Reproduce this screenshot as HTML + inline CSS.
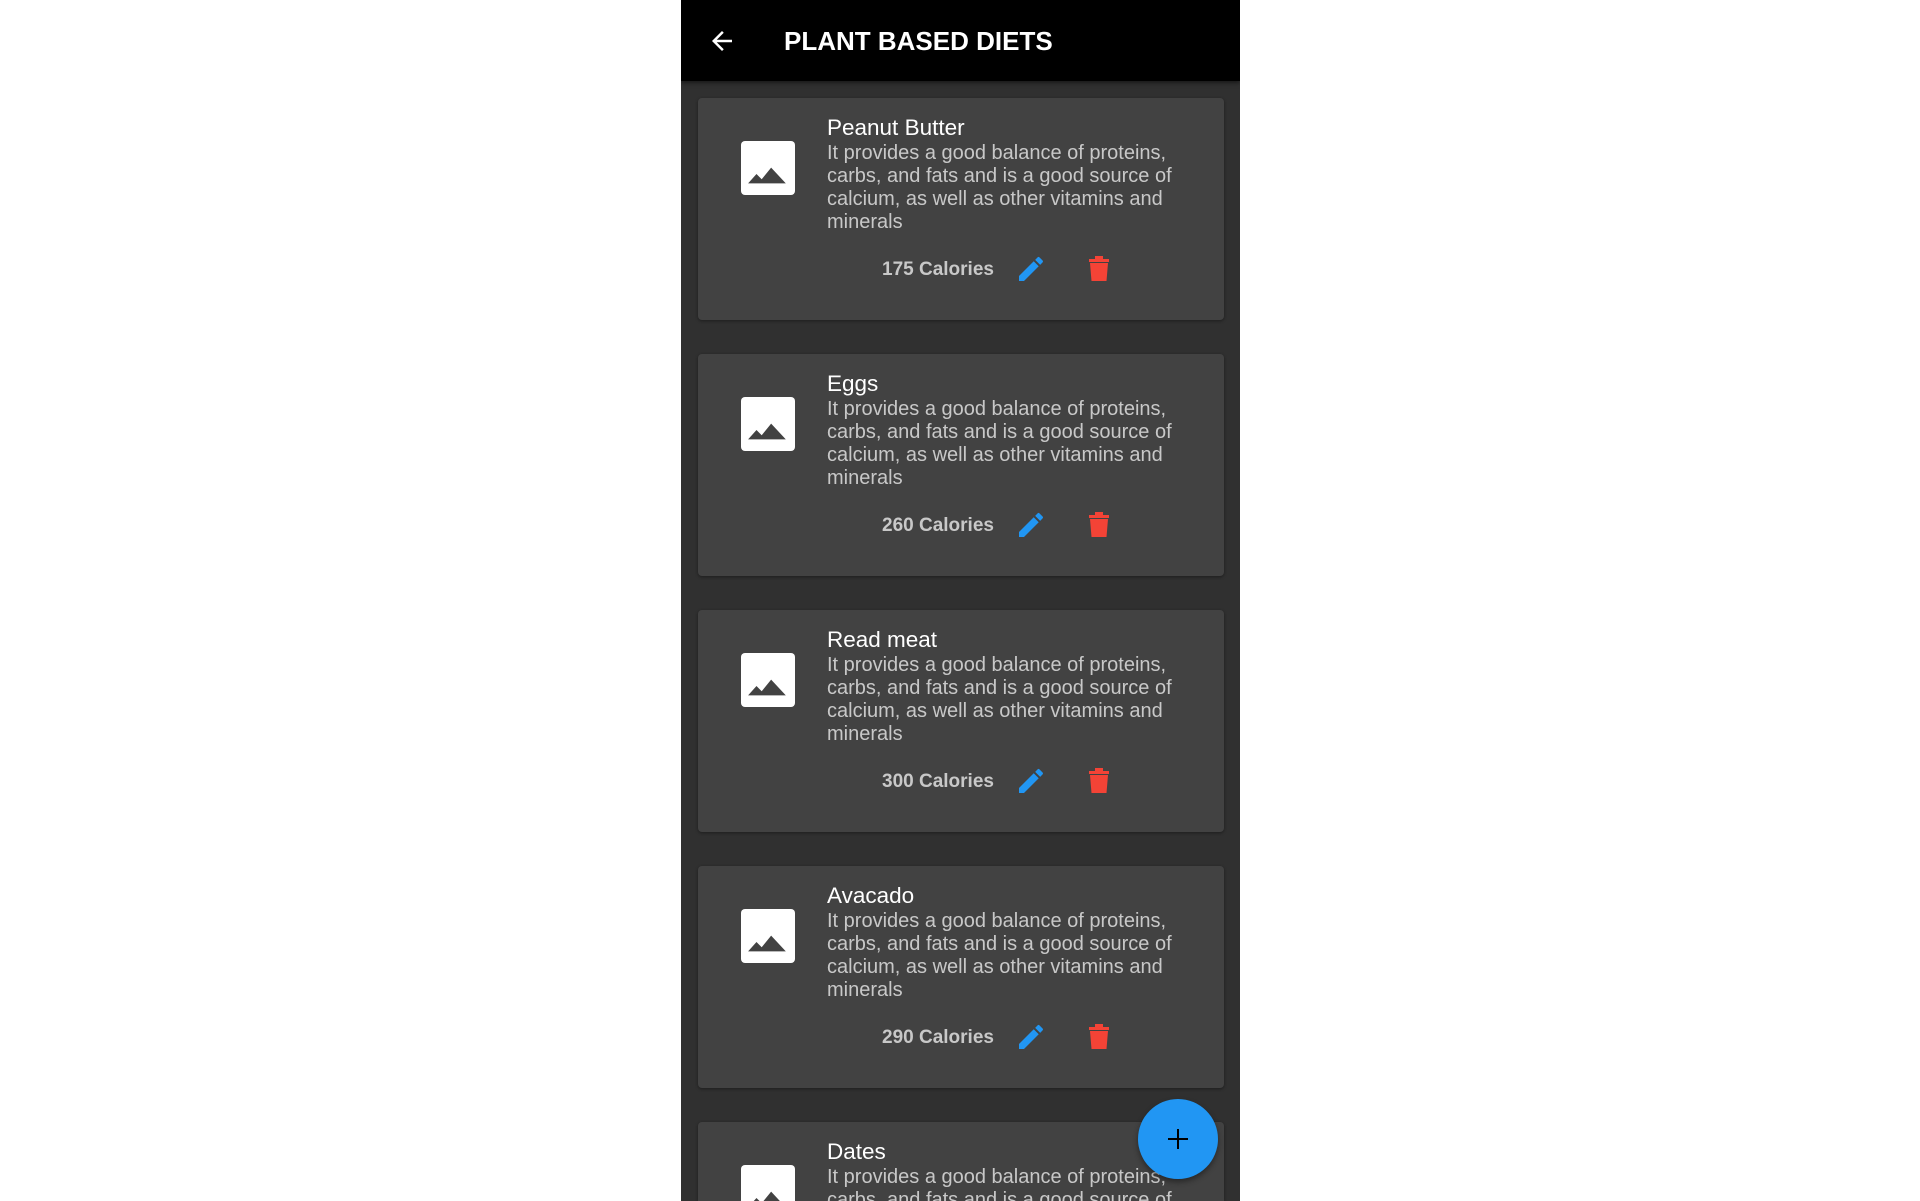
<!DOCTYPE html>
<html><head><meta charset="utf-8"><style>
*{margin:0;padding:0;box-sizing:border-box}
body{width:1920px;height:1201px;background:#fff;position:relative;overflow:hidden;font-family:"Liberation Sans",Roboto,sans-serif}
.app{position:absolute;left:681px;top:0;width:559px;height:1201px;background:#303030;overflow:hidden}
.bar{position:absolute;left:0;top:0;width:559px;height:81px;background:#000;box-shadow:0 2px 4px rgba(0,0,0,.5);z-index:2}
.bar .t{position:absolute;left:103px;top:26px;color:#fff;font-size:26px;font-weight:bold;letter-spacing:0px}
.bar svg{position:absolute;left:26px;top:26px}
.card{position:absolute;left:17px;width:526px;height:222px;background:#424242;border-radius:4px;box-shadow:0 1px 3px rgba(0,0,0,.4)}
.img{position:absolute;left:43px;top:43px;width:54px;height:54px;background:#fff;border-radius:4px}
.img svg{position:absolute;left:5px;top:24px}
.ti{position:absolute;left:129px;top:17px;color:#fff;font-size:22.5px}
.de{position:absolute;left:129px;top:44px;width:390px;color:#c8c8c8;font-size:20px;line-height:23px}
.cal{position:absolute;left:184px;top:161px;color:#c8c8c8;font-size:19px;font-weight:bold}
.pen{position:absolute;left:317px;top:155px}
.tr{position:absolute;left:389px;top:156px}
.fab{position:absolute;left:1138px;top:1099px;width:80px;height:80px;border-radius:50%;background:#2196f3;box-shadow:0 3px 6px rgba(0,0,0,.4)}
.fab:before{content:"";position:absolute;left:30px;top:39px;width:20px;height:2px;background:#000}
.fab:after{content:"";position:absolute;left:39px;top:30px;width:2px;height:20px;background:#000}
</style></head><body>
<div class="app">
<div class="bar"><svg width="30" height="30" viewBox="0 0 24 24"><path d="M20 11H7.8l5.6-5.6L12 4l-8 8 8 8 1.4-1.4L7.8 13H20z" fill="#fff"/></svg><div class="t">PLANT BASED DIETS</div></div>

<div class="card" style="top:98px"><div class="img"><svg width="44" height="20" viewBox="0 0 42 18"><path d="M2 17L10 8l5 5 9-11 14 15z" fill="#424242"/></svg></div><div class="ti">Peanut Butter</div><div class="de">It provides a good balance of proteins, carbs, and fats and is a good source of calcium, as well as other vitamins and minerals</div><div class="cal">175 Calories</div><svg class="pen" width="32" height="32" viewBox="0 0 24 24"><path d="M3 17.25V21h3.75L17.8 9.94l-3.75-3.75zM20.7 7.04a1 1 0 000-1.41l-2.34-2.34a1 1 0 00-1.41 0l-1.83 1.83 3.75 3.75z" fill="#2196f3"/></svg><svg class="tr" width="24" height="28" viewBox="0 0 24 28"><path d="M2 5h20v3H2zM8 2h8v3H8zM3 9h18l-1.5 18h-15z" fill="#f44336"/></svg></div>

<div class="card" style="top:354px"><div class="img"><svg width="44" height="20" viewBox="0 0 42 18"><path d="M2 17L10 8l5 5 9-11 14 15z" fill="#424242"/></svg></div><div class="ti">Eggs</div><div class="de">It provides a good balance of proteins, carbs, and fats and is a good source of calcium, as well as other vitamins and minerals</div><div class="cal">260 Calories</div><svg class="pen" width="32" height="32" viewBox="0 0 24 24"><path d="M3 17.25V21h3.75L17.8 9.94l-3.75-3.75zM20.7 7.04a1 1 0 000-1.41l-2.34-2.34a1 1 0 00-1.41 0l-1.83 1.83 3.75 3.75z" fill="#2196f3"/></svg><svg class="tr" width="24" height="28" viewBox="0 0 24 28"><path d="M2 5h20v3H2zM8 2h8v3H8zM3 9h18l-1.5 18h-15z" fill="#f44336"/></svg></div>

<div class="card" style="top:610px"><div class="img"><svg width="44" height="20" viewBox="0 0 42 18"><path d="M2 17L10 8l5 5 9-11 14 15z" fill="#424242"/></svg></div><div class="ti">Read meat</div><div class="de">It provides a good balance of proteins, carbs, and fats and is a good source of calcium, as well as other vitamins and minerals</div><div class="cal">300 Calories</div><svg class="pen" width="32" height="32" viewBox="0 0 24 24"><path d="M3 17.25V21h3.75L17.8 9.94l-3.75-3.75zM20.7 7.04a1 1 0 000-1.41l-2.34-2.34a1 1 0 00-1.41 0l-1.83 1.83 3.75 3.75z" fill="#2196f3"/></svg><svg class="tr" width="24" height="28" viewBox="0 0 24 28"><path d="M2 5h20v3H2zM8 2h8v3H8zM3 9h18l-1.5 18h-15z" fill="#f44336"/></svg></div>

<div class="card" style="top:866px"><div class="img"><svg width="44" height="20" viewBox="0 0 42 18"><path d="M2 17L10 8l5 5 9-11 14 15z" fill="#424242"/></svg></div><div class="ti">Avacado</div><div class="de">It provides a good balance of proteins, carbs, and fats and is a good source of calcium, as well as other vitamins and minerals</div><div class="cal">290 Calories</div><svg class="pen" width="32" height="32" viewBox="0 0 24 24"><path d="M3 17.25V21h3.75L17.8 9.94l-3.75-3.75zM20.7 7.04a1 1 0 000-1.41l-2.34-2.34a1 1 0 00-1.41 0l-1.83 1.83 3.75 3.75z" fill="#2196f3"/></svg><svg class="tr" width="24" height="28" viewBox="0 0 24 28"><path d="M2 5h20v3H2zM8 2h8v3H8zM3 9h18l-1.5 18h-15z" fill="#f44336"/></svg></div>

<div class="card" style="top:1122px;height:79px;border-radius:4px 4px 0 0"><div class="img"><svg width="44" height="20" viewBox="0 0 42 18"><path d="M2 17L10 8l5 5 9-11 14 15z" fill="#424242"/></svg></div><div class="ti">Dates</div><div class="de" style="height:35px;overflow:hidden">It provides a good balance of proteins, carbs, and fats and is a good source of calcium, as well as other vitamins and minerals</div></div>
</div>
<div class="fab"></div>
</body></html>
